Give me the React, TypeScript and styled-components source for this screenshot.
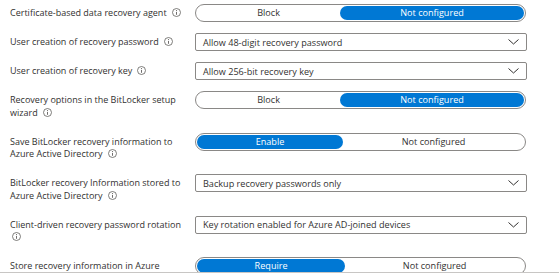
import React from "react";
import styled, { createGlobalStyle } from "styled-components";

const GlobalStyle = createGlobalStyle`
  html, body {
    margin: 0;
    padding: 0;
    background: #ffffff;
  }
  body {
    font-family: "Segoe UI", "Open Sans", "Noto Sans", sans-serif;
    color: #323130;
  }
`;

const Panel = styled.main`
  width: 559px;
  height: 273px;
  box-sizing: border-box;
  padding: 4px 0 0 10px;
  overflow: hidden;
  border-bottom: 1px solid #c8c6c4;
`;

const Row = styled.div`
  display: flex;
  align-items: flex-start;
  margin-bottom: 9px;
`;

const Label = styled.div`
  flex: none;
  width: 180px;
  padding: 3px 0 4.5px;
  margin-right: 5px;
  font-size: 9px;
  line-height: 12.5px;
  white-space: nowrap;
  color: #323130;
`;

const Line = styled.div`
  height: 12.5px;
`;

const InfoWrap = styled.span<{ $alone?: boolean }>`
  display: inline-block;
  width: 9px;
  height: 9px;
  line-height: 0;
  margin-left: ${(p) => (p.$alone ? "2px" : "5px")};
  vertical-align: -1px;
`;

const Toggle = styled.div`
  width: 331px;
  height: 18px;
  box-sizing: border-box;
  border: 1px solid #8a8886;
  border-radius: 9px;
  padding: 1px;
  display: flex;
`;

const Segment = styled.div<{ $active?: boolean }>`
  flex: 1 1 auto;
  padding: 0 10px;
  border-radius: 7px;
  text-align: center;
  font-size: 9.1px;
  line-height: 14px;
  background: ${(p) => (p.$active ? "#0078d4" : "transparent")};
  color: ${(p) => (p.$active ? "#ffffff" : "#323130")};
`;

const Dropdown = styled.div`
  width: 332px;
  height: 18px;
  box-sizing: border-box;
  border: 1px solid #8a8886;
  border-radius: 2px;
  padding: 0 7px 0 7px;
  display: flex;
  align-items: center;
  justify-content: space-between;
  font-size: 9.1px;
  color: #323130;
`;

const Info = ({ alone }: { alone?: boolean }) => (
  <InfoWrap $alone={alone}>
    <svg width="9" height="9" viewBox="0 0 9 9">
      <circle cx="4.5" cy="4.5" r="4" fill="none" stroke="#605e5c" strokeWidth="0.8" />
      <line x1="4.5" y1="4" x2="4.5" y2="6.8" stroke="#605e5c" strokeWidth="0.9" />
      <circle cx="4.5" cy="2.6" r="0.55" fill="#605e5c" />
    </svg>
  </InfoWrap>
);

const Chevron = () => (
  <svg width="11" height="6" viewBox="0 0 11 6">
    <polyline points="0.5,0.5 5.5,5 10.5,0.5" fill="none" stroke="#323130" strokeWidth="1" />
  </svg>
);

type Setting =
  | { lines: string[]; kind: "toggle"; options: [string, string]; active: number; info?: boolean }
  | { lines: string[]; kind: "select"; value: string; info?: boolean };

const settings: Setting[] = [
  { lines: ["Certificate-based data recovery agent"], kind: "toggle", options: ["Block", "Not configured"], active: 1, info: true },
  { lines: ["User creation of recovery password"], kind: "select", value: "Allow 48-digit recovery password", info: true },
  { lines: ["User creation of recovery key"], kind: "select", value: "Allow 256-bit recovery key", info: true },
  { lines: ["Recovery options in the BitLocker setup", "wizard"], kind: "toggle", options: ["Block", "Not configured"], active: 1, info: true },
  { lines: ["Save BitLocker recovery information to", "Azure Active Directory"], kind: "toggle", options: ["Enable", "Not configured"], active: 0, info: true },
  { lines: ["BitLocker recovery Information stored to", "Azure Active Directory"], kind: "select", value: "Backup recovery passwords only", info: true },
  { lines: ["Client-driven recovery password rotation", ""], kind: "select", value: "Key rotation enabled for Azure AD-joined devices", info: true },
  { lines: ["Store recovery information in Azure"], kind: "toggle", options: ["Require", "Not configured"], active: 0 },
];

export default function App() {
  return (
    <>
      <GlobalStyle />
      <Panel>
        {settings.map((s) => (
          <Row key={s.lines[0]}>
            <Label>
              {s.lines.map((l, i) => (
                <Line key={i}>
                  {l}
                  {s.info && i === s.lines.length - 1 && <Info alone={l === ""} />}
                </Line>
              ))}
            </Label>
            {s.kind === "toggle" ? (
              <Toggle>
                {s.options.map((o, i) => (
                  <Segment key={o} $active={i === s.active}>
                    {o}
                  </Segment>
                ))}
              </Toggle>
            ) : (
              <Dropdown>
                <span>{s.value}</span>
                <Chevron />
              </Dropdown>
            )}
          </Row>
        ))}
      </Panel>
    </>
  );
}
